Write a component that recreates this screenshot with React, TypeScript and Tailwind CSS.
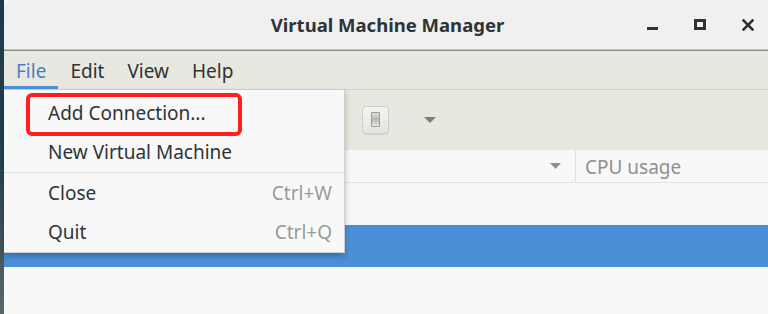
import React from "react";

const font = { fontFamily: '"Noto Sans", "Open Sans", sans-serif' };

function WindowControls() {
  return (
    <div className="flex items-center justify-end h-full">
      <div className="w-[11px] h-[3px] bg-[#2e3436] mt-[8px] mr-[36px]" />
      <div className="w-[12px] h-[11px] border-[3px] border-[#2e3436] mr-[36px]" />
      <svg width="12" height="12" viewBox="0 0 12 12" className="mr-[14px]">
        <path d="M1.5 1.5 L10.5 10.5 M10.5 1.5 L1.5 10.5" stroke="#2e3436" strokeWidth="2.6" strokeLinecap="square" />
      </svg>
    </div>
  );
}

export default function App() {
  return (
    <div className="relative w-[768px] h-[314px] overflow-hidden flex bg-[#f8f8f8]" style={font}>
      <div className="w-[4px] h-full bg-gradient-to-b from-[#1c3a4d] via-[#25414f] to-[#5c666a]" />
      <div className="flex-1 flex flex-col bg-[#f8f8f8] rounded-tl-[6px] overflow-hidden">
        <div className="h-[49px] grid grid-cols-[1fr_auto_1fr] items-center bg-[#f0f0f0] rounded-tl-[6px]">
          <div />
          <div className="text-[18.5px] font-bold text-[#2e3436] leading-none pt-[2px] pl-[3px]">Virtual Machine Manager</div>
          <WindowControls />
        </div>
        <div className="h-[1px] bg-[#c2c2bf]" />
        <div className="h-[1px] bg-[#8f908c]" />
        <div className="h-[39px] bg-[#e8e7e0] flex items-stretch border-b border-[#d0d0cc] text-[19px] text-[#2e3436]">
          <div className="px-[12px] flex items-center border-b-[3px] border-[#4a90d9] pt-[6px] text-[#4a7fc0]">File</div>
          <div className="px-[12px] flex items-center pt-[3px]">Edit</div>
          <div className="px-[11px] flex items-center pt-[3px]">View</div>
          <div className="px-[12px] flex items-center pt-[3px]">Help</div>
        </div>
        <div className="h-[60px] bg-[#e8e7e0] flex items-center pl-[358px]">
          <div className="w-[27px] h-[28px] rounded-[4px] border border-[#cfcfca] bg-gradient-to-b from-[#f4f4f2] to-[#e4e4e0] shadow-[0_1px_1px_rgba(0,0,0,0.08)] flex items-center justify-center mt-[-1px]">
            <div className="w-[9px] h-[15px] border border-[#9a9a96] bg-gradient-to-b from-[#e0e0de] via-[#b8b8b4] to-[#e8e8e6] rounded-[1px]" />
          </div>
          <svg width="12" height="6" viewBox="0 0 12 6" className="ml-[35px]">
            <path d="M0 0 H12 L6 6 Z" fill="#7d7f7b" />
          </svg>
        </div>
        <div className="h-[33px] bg-[#f8f8f8] flex items-center border-b border-[#e2e2de]">
          <div className="w-[572px] flex justify-end pr-[14px] h-full items-center border-r border-[#e2e2de]">
            <svg width="11" height="6" viewBox="0 0 11 6">
              <path d="M0 0 H11 L5.5 6 Z" fill="#8e908c" />
            </svg>
          </div>
          <div className="pl-[9px] text-[19px] text-[#8e918d] pt-[2px]">CPU usage</div>
        </div>
        <div className="h-[42px]" />
        <div className="h-[42px] bg-[#4a90d9]" />
        <div className="flex-1" />
      </div>

      <div className="absolute left-[4px] top-[90px] w-[341px] h-[163px] bg-[#f8f8f8] border-r border-b border-[#cfcfcb] shadow-[0_3px_6px_rgba(0,0,0,0.25)] flex flex-col pt-[3px] text-[19px] text-[#2e3436]">
        <div className="relative h-[40px] flex items-center pl-[44px]">
          Add Connection...
          <div className="absolute left-[22px] top-0 w-[216px] h-[43px] border-[4px] border-[#ff1f1f] rounded-[6px]" />
        </div>
        <div className="h-[39px] flex items-center pl-[44px] pt-[1px]">New Virtual Machine</div>
        <div className="h-[1px] bg-[#e0e0dc]" />
        <div className="h-[40px] flex items-center justify-between pl-[44px] pr-[12px] pt-[1px]">
          <span>Close</span>
          <span className="text-[#989b98]">Ctrl+W</span>
        </div>
        <div className="h-[40px] flex items-center justify-between pl-[44px] pr-[12px]">
          <span>Quit</span>
          <span className="text-[#989b98]">Ctrl+Q</span>
        </div>
      </div>
    </div>
  );
}
